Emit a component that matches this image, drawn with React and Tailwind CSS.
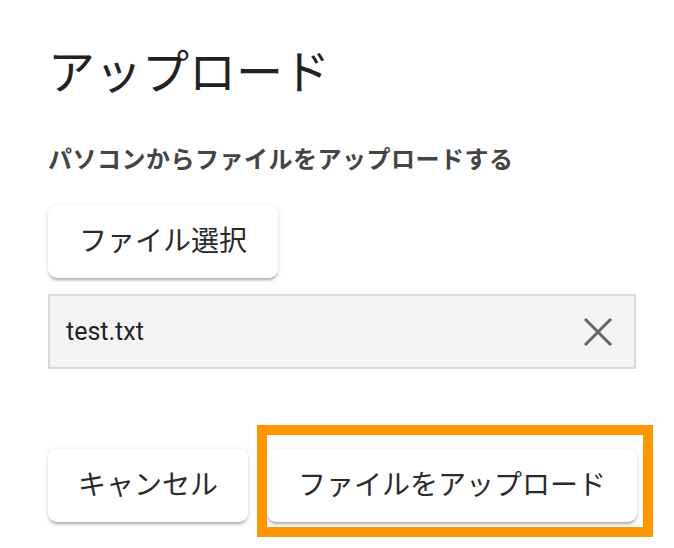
import React from 'react';

const font = "font-['Roboto','Noto_Sans_CJK_JP',sans-serif]";
const raised = 'shadow-[0_3px_3px_-1px_rgba(0,0,0,0.28),0_1px_6px_rgba(0,0,0,0.1)]';

function RaisedButton({ children, className = '' }) {
  return (
    <button
      type="button"
      className={`flex h-[73px] shrink-0 items-center justify-center whitespace-nowrap rounded-[9px] bg-white text-[28px] leading-none text-[#2a2a2a] ${raised} ${className}`}
    >
      {children}
    </button>
  );
}

export default function App() {
  return (
    <div className={`relative h-[548px] w-[674px] overflow-hidden bg-white ${font}`}>
      <div className="pl-12 pr-[38px] pt-[49px]">
        <h1 className="text-[47px] font-normal leading-none text-[#222]">アップロード</h1>

        <p className="mt-[52px] text-[24px] font-bold leading-none tracking-[0.5px] text-[#444]">
          パソコンからファイルをアップロードする
        </p>

        <div className="mt-[33px]">
          <RaisedButton className="w-[230px]">ファイル選択</RaisedButton>
        </div>

        <div className="mt-[16px] flex h-[75px] items-center justify-between border-2 border-[#d9d9d9] bg-[#f4f4f4] pl-4 pr-[22px]">
          <span className="text-[25px] text-[#222]">test.txt</span>
          <svg width="28" height="28" viewBox="0 0 28 28" fill="none" stroke="#666" strokeWidth="3">
            <path d="M1 1 27 27M27 1 1 27" />
          </svg>
        </div>

        <div className="mt-[80px] flex gap-[19px]">
          <RaisedButton className="w-[200px]">キャンセル</RaisedButton>
          <RaisedButton className="w-[370px]">ファイルをアップロード</RaisedButton>
        </div>
      </div>

      {/* highlight around the upload button */}
      <div className="pointer-events-none absolute left-[257px] top-[425px] h-[112px] w-[396px] border-[10px] border-[#ff9500]" />
    </div>
  );
}
